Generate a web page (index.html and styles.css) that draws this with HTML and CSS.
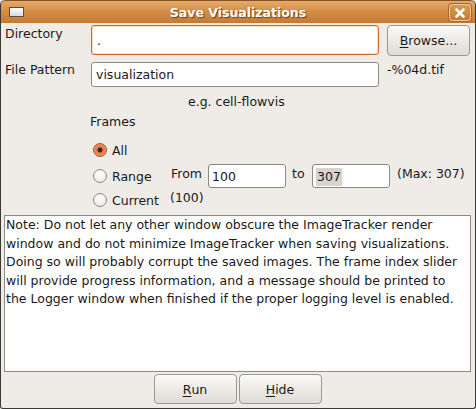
FILE: index.html
```html
<!DOCTYPE html>
<html>
<head>
<meta charset="utf-8">
<link rel="stylesheet" href="styles.css">
</head>
<body>
<div class="window">
  <div class="titlebar">
    <span class="win-icon"></span>
    <span class="title">Save Visualizations</span>
    <span class="close">
      <svg width="12" height="12" viewBox="0 0 12 12"><path d="M2.5 2.5 L9.5 9.5 M9.5 2.5 L2.5 9.5" stroke="#fff" stroke-width="2.6" stroke-linecap="round"/></svg>
    </span>
  </div>
  <div class="body">
    <div class="row row-dir">
      <span class="label">Directory</span>
      <span class="entry entry-focus">.</span>
      <span class="button browse"><u>B</u>rowse...</span>
    </div>
    <div class="row row-pat">
      <span class="label">File Pattern</span>
      <span class="entry entry-pat">visualization</span>
      <span class="suffix">-%04d.tif</span>
    </div>
    <div class="hint">e.g. cell-flowvis</div>
    <div class="frames">Frames</div>
    <div class="radios">
      <div class="radio-row r-all">
        <span class="radio checked"></span><span class="rlabel">All</span>
      </div>
      <div class="radio-row r-range">
        <span class="radio"></span><span class="rlabel rl-range">Range</span>
        <span class="small-label from">From</span>
        <span class="entry num">100</span>
        <span class="small-label to">to</span>
        <span class="entry num"><span class="sel">307</span></span>
        <span class="small-label max">(Max: 307)</span>
      </div>
      <div class="radio-row r-cur">
        <span class="radio"></span><span class="rlabel rl-cur">Current</span>
        <span class="small-label cur">(100)</span>
      </div>
    </div>
    <div class="note">Note: Do not let any other window obscure the ImageTracker render<br>window and do not minimize ImageTracker when saving visualizations.<br>Doing so will probably corrupt the saved images. The frame index slider<br>will provide progress information, and a message should be printed to<br>the Logger window when finished if the proper logging level is enabled.</div>
    <div class="actions">
      <span class="button act"><u>R</u>un</span>
      <span class="button act"><u>H</u>ide</span>
    </div>
  </div>
</div>
</body>
</html>
```
FILE: styles.css
```css
html, body {
  margin: 0;
  padding: 0;
  background: #efebe7;
}
body {
  font-family: "DejaVu Sans", sans-serif;
  font-size: 12.5px;
  color: #1a1a1a;
}
.window {
  width: 476px;
  height: 409px;
  box-sizing: border-box;
  background: #efebe7;
  border: 1px solid #3b3935;
  border-top: none;
  border-radius: 5px 5px 3px 3px;
  overflow: hidden;
  display: flex;
  flex-direction: column;
}
.titlebar {
  height: 23px;
  flex: none;
  background: linear-gradient(#e4ab6d 0%, #d68e46 45%, #c47a34 100%);
  border-top: 1px solid #8a5220;
  box-sizing: border-box;
  border-radius: 5px 5px 0 0;
  position: relative;
  display: flex;
  align-items: center;
  justify-content: center;
}
.title {
  color: #fff;
  font-weight: bold;
  font-size: 12.5px;
  text-shadow: 1px 1px 1px #6e3d10;
  margin-top: 1px;
}
.win-icon {
  position: absolute;
  left: 8px;
  top: 6px;
  width: 13px;
  height: 8px;
  border: 1px solid #6a4a2a;
  background: linear-gradient(#ffffff, #d6dbe4);
}
.close {
  position: absolute;
  right: 4px;
  top: 3px;
  width: 20px;
  height: 15px;
  border: 1px solid #f0c99b;
  border-radius: 3px;
  background: linear-gradient(#d9994f, #c57d36);
  box-shadow: 0 0 0 1px #a86525;
  display: flex;
  align-items: center;
  justify-content: center;
}
.body {
  flex: 1;
  display: flex;
  flex-direction: column;
  padding: 0 4px 0 3px;
}
.row {
  display: flex;
  align-items: flex-start;
}
.label {
  width: 87px;
  padding-left: 1px;
  flex: none;
  box-sizing: border-box;
}
.row-dir {
  margin-top: 2px;
  height: 31px;
}
.row-dir .label {
  margin-top: 1px;
}
.entry {
  box-sizing: border-box;
  background: #fff;
  border: 1px solid #8c8984;
  border-radius: 3px;
  display: flex;
  align-items: center;
  padding-left: 4px;
  flex: none;
}
.entry-focus {
  width: 288px;
  height: 30px;
  border-color: #c8692a;
  box-shadow: inset 0 0 0 1px #fbe2c6;
  padding-left: 5px;
}
.button {
  box-sizing: border-box;
  border: 1px solid #9b9893;
  border-radius: 4px;
  background: linear-gradient(#fbfaf9, #eae7e3 60%, #dfdbd6);
  display: flex;
  align-items: center;
  justify-content: center;
  flex: none;
}
.browse {
  margin-left: 8px;
  width: 83px;
  height: 31px;
}
.row-pat {
  margin-top: 6px;
  height: 25px;
}
.entry-pat {
  width: 288px;
  height: 25px;
  padding-left: 4px;
}
.suffix {
  margin-left: 8px;
}
.hint {
  margin-top: 7px;
  height: 16px;
  line-height: 16px;
  padding-left: 184px;
}
.frames {
  margin-top: 4px;
  height: 16px;
  line-height: 16px;
  padding-left: 86px;
}
.radios {
  padding-left: 89px;
  display: flex;
  flex-direction: column;
}
.radio-row {
  display: flex;
  align-items: center;
}
.r-all {
  margin-top: 12px;
  height: 16px;
}
.r-range {
  margin-top: 6px;
  height: 24px;
}
.r-cur {
  margin-top: 2px;
  height: 20px;
}
.radio {
  width: 12px;
  height: 12px;
  border-radius: 50%;
  border: 1px solid #8d8a85;
  background: radial-gradient(circle at 50% 35%, #ffffff, #e6e3df);
  flex: none;
  box-sizing: content-box;
}
.radio.checked {
  border-color: #a4582a;
  background: radial-gradient(circle, #3a2a20 0 2.2px, #e07a4a 2.8px, #f3a27a 100%);
}
.rlabel {
  margin-left: 5px;
}
.rl-range {
  width: 59px;
}
.rl-cur {
  width: 58px;
}
.small-label {
  align-self: flex-start;
}
.from {
  margin-top: 2px;
  width: 37px;
}
.num {
  width: 78px;
  height: 24px;
  padding-left: 3px;
  padding-top: 1px;
}
.to {
  margin-top: 2px;
  width: 26px;
  padding-left: 6px;
  box-sizing: border-box;
}
.sel {
  background: #d8d3cd;
  padding: 1px 1px 2px 1px;
}
.max {
  margin-top: 2px;
  margin-left: 7px;
}
.cur {
  margin-top: 0px;
}
.note {
  margin-top: 5px;
  height: 157px;
  box-sizing: border-box;
  background: #fff;
  border: 1px solid #8e8b86;
  padding: 0 0 0 1px;
  line-height: 18.5px;
  width: 467px;
  white-space: nowrap;
}
.actions {
  margin-top: 2px;
  display: flex;
  justify-content: center;
  gap: 2px;
}
.act {
  width: 83px;
  height: 30px;
}
u {
  text-decoration: underline;
  text-underline-offset: 2px;
}
```
